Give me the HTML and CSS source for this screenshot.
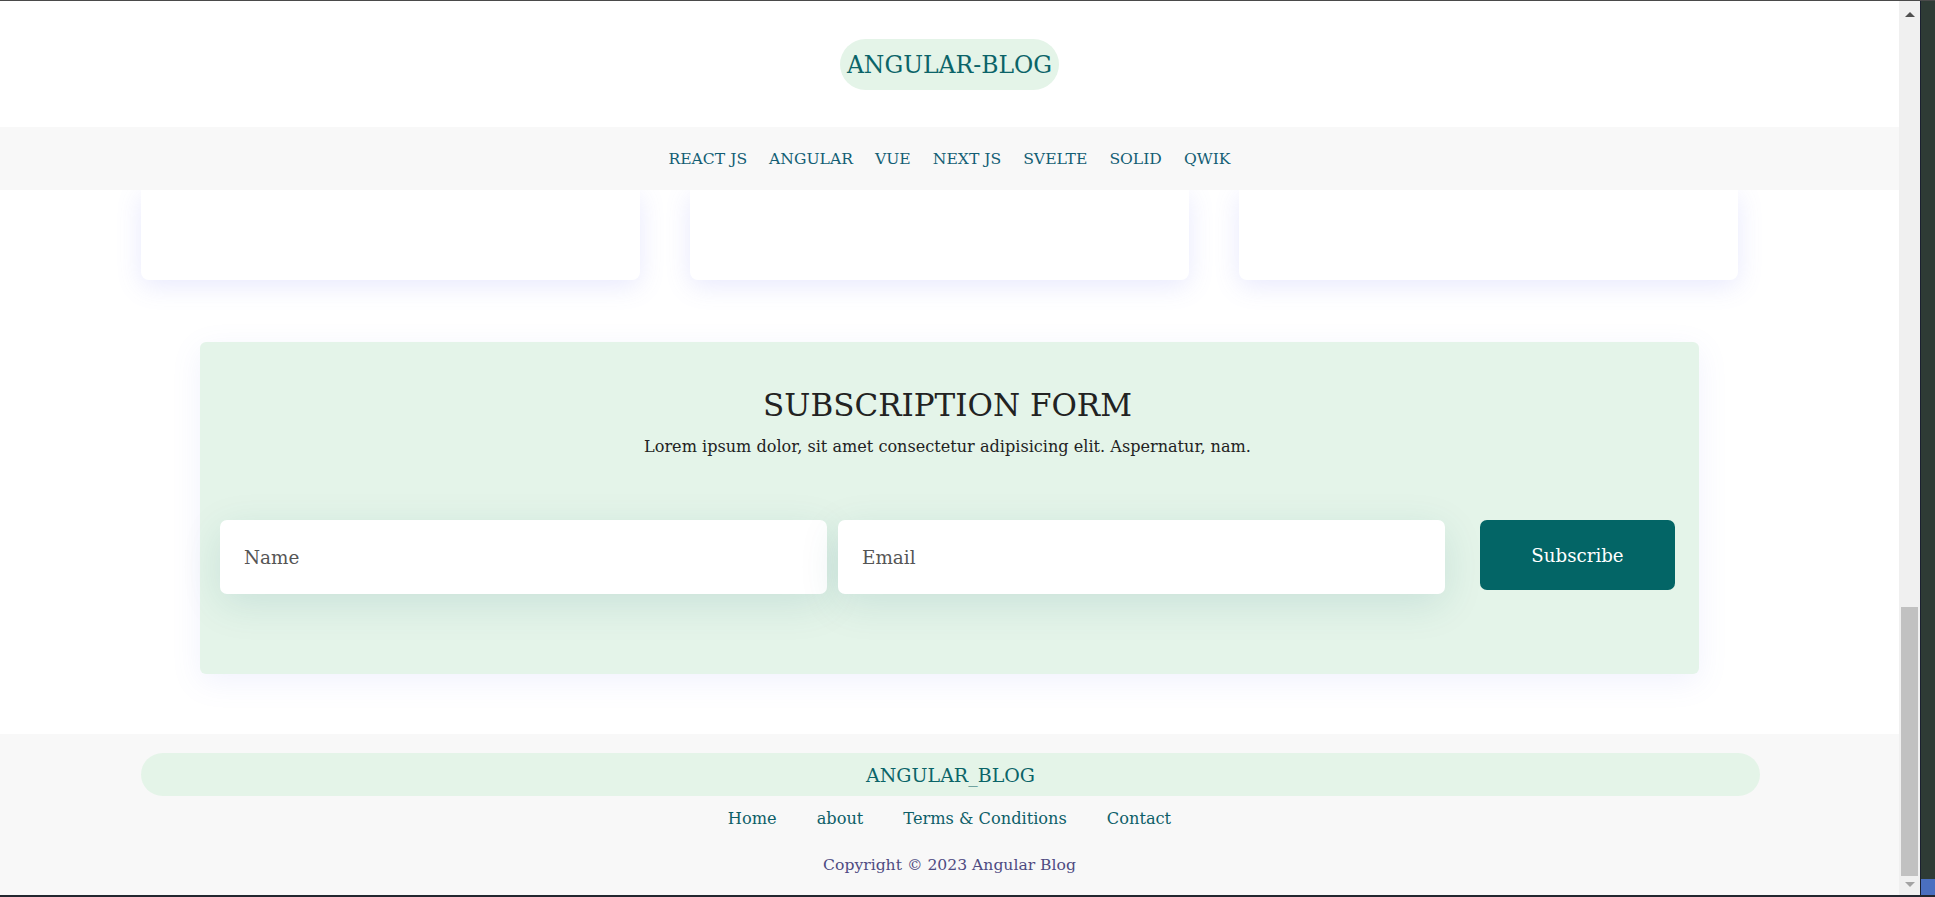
FILE: index.html
```html
<!DOCTYPE html>
<html lang="en">
<head>
<meta charset="utf-8">
<title>Angular Blog</title>
<link rel="stylesheet" href="styles.css">
</head>
<body>
<div class="screen">
  <div class="page">
    <header class="site-header">
      <a class="logo" href="#">ANGULAR-BLOG</a>
    </header>
    <nav class="main-nav">
      <a href="#">REACT JS</a>
      <a href="#">ANGULAR</a>
      <a href="#">VUE</a>
      <a href="#">NEXT JS</a>
      <a href="#">SVELTE</a>
      <a href="#">SOLID</a>
      <a href="#">QWIK</a>
    </nav>
    <section class="cards">
      <div class="card"></div>
      <div class="card"></div>
      <div class="card"></div>
    </section>
    <section class="subscribe">
      <h2 class="sub-title">SUBSCRIPTION FORM</h2>
      <p class="sub-text">Lorem ipsum dolor, sit amet consectetur adipisicing elit. Aspernatur, nam.</p>
      <form class="sub-form">
        <input class="field" type="text" placeholder="Name">
        <input class="field" type="email" placeholder="Email">
        <button class="sub-btn" type="button">Subscribe</button>
      </form>
    </section>
    <footer class="site-footer">
      <div class="footer-brand">ANGULAR_BLOG</div>
      <div class="footer-links">
        <a href="#">Home</a>
        <a href="#">about</a>
        <a href="#">Terms &amp; Conditions</a>
        <a href="#">Contact</a>
      </div>
      <p class="copyright">Copyright © 2023 Angular Blog</p>
    </footer>
  </div>
  <div class="scrollbar">
    <div class="sb-up"></div>
    <div class="sb-track"><div class="sb-thumb"></div></div>
    <div class="sb-down"></div>
  </div>
  <div class="desktop">
    <div class="desktop-fill"></div>
    <div class="desktop-task"></div>
  </div>
</div>
</body>
</html>
```

FILE: styles.css
```css
* { box-sizing: border-box; }
html, body { margin: 0; padding: 0; height: 100%; overflow: hidden; }
body {
  font-family: "DejaVu Serif", "Liberation Serif", serif;
  background: #ffffff;
}
.screen {
  display: flex;
  width: 1935px;
  height: 897px;
  border-top: 1px solid #4a4a4a;
  border-bottom: 2px solid #23272f;
}
.page {
  width: 1899px;
  flex: none;
  display: flex;
  flex-direction: column;
  background: #fff;
  overflow: hidden;
}
.site-header {
  height: 126px;
  display: flex;
  justify-content: center;
  align-items: flex-start;
  padding-top: 38px;
}
.logo {
  display: inline-flex;
  align-items: center;
  height: 51px;
  padding: 0 7px;
  border-radius: 26px;
  background: #e4f4e8;
  color: #0b6468;
  font-size: 23.5px;
  text-decoration: none;
}
.main-nav {
  position: relative;
  z-index: 1;
  height: 63px;
  background: #f8f8f8;
  display: flex;
  justify-content: center;
  align-items: center;
  gap: 22px;
}
.main-nav a {
  color: #135e74;
  text-decoration: none;
  font-size: 15.6px;
}
.cards {
  display: flex;
  gap: 50px;
  padding-left: 141px;
}
.card {
  width: 499px;
  height: 90px;
  background: #fff;
  border-radius: 0 0 8px 8px;
  box-shadow: 0 6px 26px rgba(110, 120, 240, 0.16);
}
.subscribe {
  margin: 62px auto 0;
  width: 1499px;
  height: 332px;
  background: #e4f4e9;
  border-radius: 6px;
  box-shadow: 0 8px 30px rgba(120, 130, 240, 0.10);
  padding: 41px 24px 0 20px;
  text-align: center;
}
.sub-title {
  margin: 0;
  font-weight: 400;
  font-size: 31px;
  color: #222;
  line-height: 44px;
}
.sub-text {
  margin: 9px 0 0;
  font-size: 16.1px;
  color: #222;
  line-height: 22px;
}
.sub-form {
  margin-top: 62px;
  display: grid;
  grid-template-columns: 1fr 1fr 219px;
  column-gap: 11px;
  align-items: start;
}
.field {
  height: 74px;
  border: none;
  border-radius: 7px;
  background: #fff;
  padding: 0 24px;
  font-family: inherit;
  font-size: 18.4px;
  color: #333;
  box-shadow: 0 10px 40px rgba(0, 100, 110, 0.12);
  outline: none;
}
.field::placeholder { color: #555; }
.sub-btn {
  justify-self: end;
  width: 195px;
  height: 70px;
  border: none;
  border-radius: 7px;
  background: #036566;
  color: #fff;
  font-family: inherit;
  font-size: 18.2px;
}
.site-footer {
  margin-top: 60px;
  flex: 1;
  background: #f8f8f8;
  display: flex;
  flex-direction: column;
  align-items: center;
  padding-top: 19px;
}
.footer-brand {
  width: 1619px;
  margin-left: 2px;
  height: 43px;
  border-radius: 22px;
  background: #e4f4e8;
  color: #0b6468;
  font-size: 19px;
  display: flex;
  align-items: center;
  justify-content: center;
}
.footer-links {
  margin-top: 12px;
  display: flex;
  gap: 40px;
}
.footer-links a {
  color: #0e5f68;
  text-decoration: none;
  font-size: 16.2px;
  line-height: 22px;
}
.copyright {
  margin: 24px 0 0;
  color: #4e4b82;
  font-size: 15.6px;
  line-height: 22px;
}
.scrollbar {
  width: 21px;
  flex: none;
  background: #f0f0f0;
  display: flex;
  flex-direction: column;
  align-items: center;
}
.sb-up {
  margin-top: 11px;
  width: 0; height: 0;
  border-left: 5px solid transparent;
  border-right: 5px solid transparent;
  border-bottom: 5px solid #505050;
}
.sb-track {
  flex: 1;
  width: 100%;
  display: flex;
  flex-direction: column;
  justify-content: flex-end;
  padding: 0 2px 0 2px;
}
.sb-thumb {
  height: 269px;
  background: #c1c1c1;
  margin-bottom: 6px;
}
.sb-down {
  margin-bottom: 8px;
  width: 0; height: 0;
  border-left: 5px solid transparent;
  border-right: 5px solid transparent;
  border-top: 5px solid #a3a3a3;
}
.desktop {
  flex: 1;
  display: flex;
  flex-direction: column;
  border-left: 1px solid #1b2030;
}
.desktop-fill { flex: 1; background: #2e3b35; }
.desktop-task { height: 16px; background: #4a6fc0; }
```
